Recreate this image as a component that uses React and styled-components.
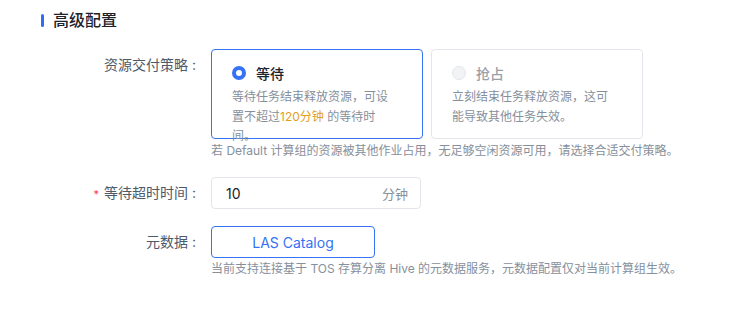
import styled, { createGlobalStyle } from "styled-components";

const GlobalStyle = createGlobalStyle`
  body {
    margin: 0;
    background: #ffffff;
    font-family: "Inter", "Noto Sans CJK SC", sans-serif;
    color: #1d2129;
  }
  * {
    box-sizing: border-box;
  }
`;

function App() {
  const strategies = [
    {
      key: "wait",
      title: "等待",
      checked: true,
      desc: (
        <>
          等待任务结束释放资源，可设置不超过<Highlight>120分钟</Highlight> 的等待时间。
        </>
      ),
    },
    {
      key: "preempt",
      title: "抢占",
      checked: false,
      desc: "立刻结束任务释放资源，这可能导致其他任务失效。",
    },
  ];

  return (
    <Page>
      <GlobalStyle />
      <SectionTitle>
        <TitleBar />
        高级配置
      </SectionTitle>
      <Form>
        <FormItem>
          <Label>
            资源交付策略<Colon>:</Colon>
          </Label>
          <Control>
            <CardGroup>
              {strategies.map(({ key, title, checked, desc }) => (
                <Card key={key} $checked={checked}>
                  <CardHead>
                    <Radio $checked={checked} />
                    <CardTitle $checked={checked}>{title}</CardTitle>
                  </CardHead>
                  <CardDesc>{desc}</CardDesc>
                </Card>
              ))}
            </CardGroup>
            <Hint>
              若 Default 计算组的资源被其他作业占用，无足够空闲资源可用，请选择合适交付策略。
            </Hint>
          </Control>
        </FormItem>
        <FormItem>
          <Label>
            <Star>*</Star>等待超时时间<Colon>:</Colon>
          </Label>
          <Control>
            <InputBox>
              <InputValue>10</InputValue>
              <Suffix>分钟</Suffix>
            </InputBox>
          </Control>
        </FormItem>
        <FormItem>
          <Label>
            元数据<Colon>:</Colon>
          </Label>
          <Control>
            <OutlineButton>LAS Catalog</OutlineButton>
            <Hint $tight>
              当前支持连接基于 TOS 存算分离 Hive 的元数据服务，元数据配置仅对当前计算组生效。
            </Hint>
          </Control>
        </FormItem>
      </Form>
    </Page>
  );
}

const Page = styled.div`
  width: 737px;
  height: 317px;
  padding-top: 10px;
`;

const SectionTitle = styled.div`
  display: flex;
  align-items: center;
  gap: 9px;
  margin-left: 41px;
  font-size: 16px;
  line-height: 20px;
  font-weight: 500;
  color: #1d2129;
`;

const TitleBar = styled.span`
  width: 3px;
  height: 13px;
  border-radius: 2px;
  background: #2f6df6;
`;

const Form = styled.div`
  margin-top: 19px;
`;

const FormItem = styled.div`
  display: flex;
  margin-bottom: 16px;
`;

const Label = styled.div`
  width: 211px;
  flex-shrink: 0;
  padding-right: 15px;
  display: flex;
  justify-content: flex-end;
  align-items: baseline;
  font-size: 14px;
  line-height: 32px;
  color: #4e5969;
`;

const Colon = styled.span`
  margin-left: 4px;
`;

const Star = styled.span`
  color: #f53f3f;
  font-size: 11px;
  margin-right: 5px;
`;

const Control = styled.div`
  display: flex;
  flex-direction: column;
  align-items: flex-start;
`;

const CardGroup = styled.div`
  display: flex;
  gap: 8px;
`;

const Card = styled.div`
  width: 212px;
  height: 90px;
  padding: 12px 20px 0;
  border-radius: 4px;
  border: 1px solid ${(p) => (p.$checked ? "#3572f6" : "#e5e6eb")};
  background: #ffffff;
`;

const CardHead = styled.div`
  display: flex;
  align-items: center;
  gap: 10px;
  height: 22px;
`;

const Radio = styled.span`
  width: 14px;
  height: 14px;
  border-radius: 50%;
  flex-shrink: 0;
  background: ${(p) => (p.$checked ? "#ffffff" : "#f2f3f5")};
  border: ${(p) => (p.$checked ? "4px solid #3572f6" : "1px solid #e5e6eb")};
`;

const CardTitle = styled.span`
  font-size: 14px;
  font-weight: 500;
  color: ${(p) => (p.$checked ? "#1d2129" : "#9aa0aa")};
`;

const CardDesc = styled.div`
  width: 162px;
  margin-top: 3px;
  font-size: 12px;
  line-height: 19.5px;
  color: #86909c;
`;

const Highlight = styled.span`
  color: #e0a01e;
`;

const Hint = styled.div`
  margin-top: ${(p) => (p.$tight ? "1px" : "2px")};
  font-size: 12px;
  line-height: 20px;
  color: #86909c;
  white-space: nowrap;
`;

const InputBox = styled.div`
  width: 210px;
  height: 32px;
  padding: 0 12px 0 14px;
  display: flex;
  align-items: center;
  justify-content: space-between;
  border: 1px solid #e5e6eb;
  border-radius: 4px;
`;

const InputValue = styled.span`
  font-size: 14px;
  color: #1d2129;
`;

const Suffix = styled.span`
  font-size: 13px;
  color: #86909c;
`;

const OutlineButton = styled.button`
  width: 164px;
  height: 32px;
  border: 1px solid #3572f6;
  border-radius: 4px;
  background: #ffffff;
  color: #3572f6;
  font-family: inherit;
  font-size: 14px;
  cursor: pointer;
`;

export default App;
